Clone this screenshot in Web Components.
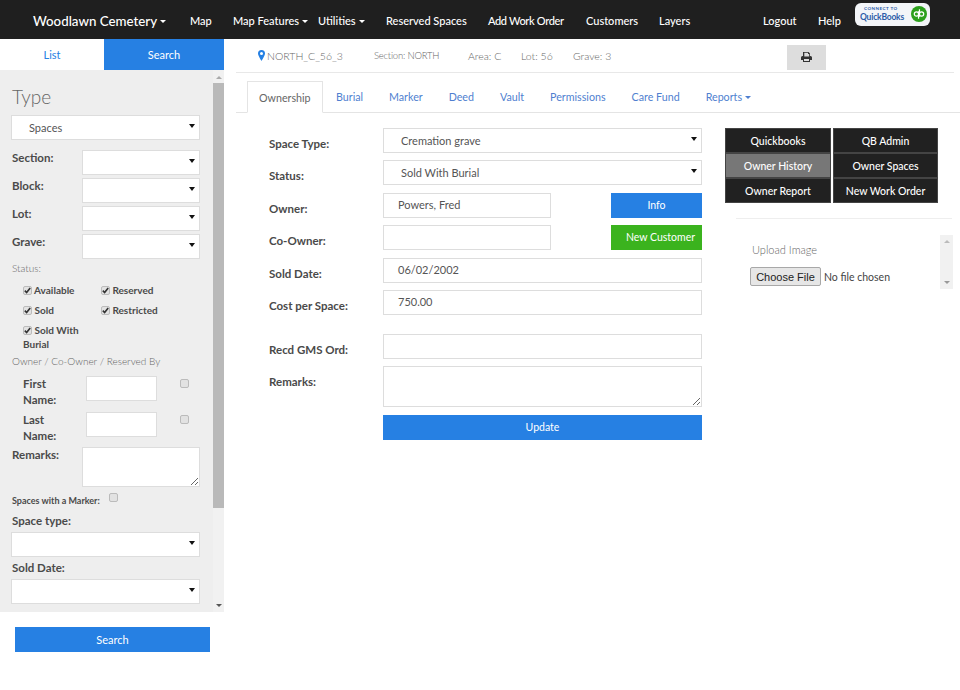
<!DOCTYPE html>
<html lang="en">
<head>
<meta charset="utf-8">
<title>Woodlawn Cemetery</title>
<style>
  html, body { margin: 0; padding: 0; background: #fff; }
  body { font-family: "Lato", "Liberation Sans", sans-serif; color: #555; width: 960px; height: 690px; overflow: hidden; }
  app-body { display: flex; }
</style>
</head>
<body>

<app-navbar></app-navbar>
<app-body>
  <search-panel></search-panel>
  <main-area></main-area>
</app-body>

<script>
// small base so every element only has to give its markup
class Base extends HTMLElement {
  constructor() {
    super();
    this.attachShadow({ mode: "open" });
  }
  connectedCallback() {
    this.render();
  }
}

class AppBody extends Base {
  render() {
    this.shadowRoot.innerHTML = `<style>:host{display:flex;align-items:flex-start}</style><slot></slot>`;
  }
}

class NavLink extends Base {
  render() {
    const caret = this.hasAttribute("caret");
    this.shadowRoot.innerHTML = `
      <style>
        :host { display: inline-flex; align-items: center; gap: 3px; color: #fff; white-space: nowrap; }
        i { width: 0; height: 0; border: 3px solid transparent; border-top-color: #fff; border-bottom: 0; margin-top: 1px; }
      </style>
      <slot></slot>${caret ? "<i></i>" : ""}`;
  }
}

class QbBadge extends Base {
  render() {
    this.shadowRoot.innerHTML = `
      <style>
        :host { display: flex; align-items: center; width: 75px; height: 23px; box-sizing: border-box; background: #f3f5f8; border-radius: 6px; padding: 0 3px 0 5px; margin-top: -13px; font-family: "Lato", sans-serif; }
        .txt { flex: 1; display: flex; flex-direction: column; align-items: flex-start; color: #2b5ca8; line-height: 1; }
        .a { font-size: 4.500px; font-weight: 700; letter-spacing: .5px; margin: 0 0 1px 4px; }
        .b { font-size: 8.500px; font-weight: 700; letter-spacing: -.2px; }
      </style>
      <div class="txt"><span class="a">CONNECT TO</span><span class="b">QuickBooks</span></div>
      <svg width="16" height="16" viewBox="0 0 17 17">
        <circle cx="8.5" cy="8.5" r="8.5" fill="#2ca01c"/>
        <g fill="none" stroke="#fff" stroke-width="1.3">
          <circle cx="5.8" cy="8.5" r="2.3"/>
          <circle cx="11.2" cy="8.5" r="2.3"/>
          <path d="M8 5.500v8M9 3.500v8"/>
        </g>
      </svg>`;
  }
}

class AppNavbar extends Base {
  render() {
    this.shadowRoot.innerHTML = `
      <style>
        :host { display: block; height: 39px; background: #1f1f1f; font-size: 11px; font-weight: 500; }
        nav { display: flex; align-items: center; height: 39px; box-sizing: border-box; padding: 2px 0 0 33px; }
        .brand { font-size: 13.3px; width: 157px; }
        .w1 { width: 43px; } .w2 { width: 85px; } .w3 { width: 68px; } .w4 { width: 102px; }
        .w5 { width: 98px; letter-spacing: -.35px; } .w6 { width: 73px; } .w7 { width: 104px; } .w8 { width: 55px; } .w9 { width: 37px; }
      </style>
      <nav>
        <nav-link class="brand" caret>Woodlawn Cemetery</nav-link>
        <nav-link class="w1">Map</nav-link>
        <nav-link class="w2" caret>Map Features</nav-link>
        <nav-link class="w3" caret>Utilities</nav-link>
        <nav-link class="w4">Reserved Spaces</nav-link>
        <nav-link class="w5">Add Work Order</nav-link>
        <nav-link class="w6">Customers</nav-link>
        <nav-link class="w7">Layers</nav-link>
        <nav-link class="w8">Logout</nav-link>
        <nav-link class="w9">Help</nav-link>
        <qb-badge></qb-badge>
      </nav>`;
  }
}

// looks like a select; label text goes in the slot
class SelectBox extends Base {
  render() {
    this.shadowRoot.innerHTML = `
      <style>
        :host { display: flex; align-items: center; box-sizing: border-box; height: 25px; background: #fff; border: 1px solid #ddd; color: #555; font-size: 11px; padding: 0 4px 1px 17px; }
        span { flex: 1; }
        i { width: 0; height: 0; border: 3px solid transparent; border-top: 4px solid #111; border-bottom: 0; margin-top: -2px; }
      </style>
      <span><slot></slot></span><i></i>`;
  }
}

class TextBox extends Base {
  render() {
    this.shadowRoot.innerHTML = `
      <style>
        :host { display: flex; align-items: center; box-sizing: border-box; height: 25px; background: #fff; border: 1px solid #ddd; color: #555; font-size: 11px; padding: 0 14px 1px; }
      </style>
      <slot></slot>`;
  }
}

class AreaBox extends Base {
  render() {
    this.shadowRoot.innerHTML = `
      <style>
        :host { display: block; }
        textarea { display: block; width: 100%; height: 100%; box-sizing: border-box; margin: 0; border: 1px solid #ddd; background: #fff; resize: vertical; outline: none; }
      </style>
      <textarea></textarea>`;
  }
}

class CheckMark extends Base {
  render() {
    const on = this.hasAttribute("checked");
    this.shadowRoot.innerHTML = `
      <style>
        :host { display: inline-block; flex: none; width: 9px; height: 9px; }
        span { display: block; box-sizing: border-box; width: 9px; height: 9px; background: #e2e2e2; border: 1px solid #bbb; border-radius: 2px; }
        svg { display: block; margin: -1px; }
      </style>
      <span>${on ? '<svg width="9" height="9" viewBox="0 0 10 10"><path d="M2 5.2l2 2 4-5" fill="none" stroke="#333" stroke-width="1.8"/></svg>' : ""}</span>`;
  }
}

class SearchPanel extends Base {
  render() {
    this.shadowRoot.innerHTML = `
      <style>
        :host { display: block; flex: none; width: 224px; font-size: 11px; color: #555; }
        b { font-weight: 700; color: #4a4a4a; }
        .tabs { display: grid; grid-template-columns: 104px 120px; height: 31px; line-height: 31px; text-align: center; font-size: 11px; }
        .tabs div:first-child { color: #2680e3; }
        .tabs div:last-child { background: #2680e3; color: #fff; }
        .body { display: flex; height: 542px; background: #eee; overflow: hidden; }
        .col { flex: 1; box-sizing: border-box; padding: 14px 13px 0 11px; }
        .title { font-size: 19px; font-weight: 300; color: #666; line-height: 26px; margin-bottom: 5px; padding-left: 1px; }
        .row { display: grid; grid-template-columns: 71px 1fr; margin-top: 3px; }
        .row b { font-size: 11.500px; line-height: 15px; padding-left: 1px; }
        .first { margin: 10px 0 3px; }
        .hint { font-size: 10px; font-weight: 300; color: #666; line-height: 14px; padding-left: 1px; }
        .checks { display: grid; grid-template-columns: 78px 1fr; row-gap: 6px; padding: 8px 0 3px 12px; font-size: 10px; line-height: 14px; }
        .checks check-mark { vertical-align: -1px; }
        .name { display: grid; grid-template-columns: 63px 71px 1fr; padding-left: 12px; margin-top: 4px; }
        .name b { font-size: 11.500px; line-height: 16px; }
        .name check-mark { margin: 3px 0 0 23px; }
        .marker { display: flex; align-items: flex-start; font-size: 9px; margin: 6px 0 6px 1px; gap: 9px; line-height: 12px; }
        .marker b { padding-top: 2px; }
        .big { display: block; font-size: 11.500px; line-height: 16px; margin-bottom: 3px; padding-left: 1px; }
        .gap { height: 3px; }
        .bar { flex: none; width: 11px; background: #f1f1f1; display: flex; flex-direction: column; align-items: center; }
        .bar i { flex: none; width: 0; height: 0; border: 3px solid transparent; }
        .up { border-bottom-color: #aaa !important; border-top: 0 !important; margin: 6px 0 4px; }
        .thumb { width: 11px; height: 425px; background: #b9b9b9; }
        .dn { border-top-color: #555 !important; border-bottom: 0 !important; margin-top: auto; margin-bottom: 5px; }
        .foot { display: block; padding: 15px 14px 0 15px; }
        .go { display: block; box-sizing: border-box; width: 195px; height: 25px; line-height: 24px; border: 0; padding: 0; background: #2680e3; color: #fff; font: inherit; font-size: 11px; text-align: center; }
      </style>
      <div class="tabs"><div>List</div><div>Search</div></div>
      <div class="body">
        <div class="col">
          <div class="title">Type</div>
          <select-box>Spaces</select-box>
          <div class="row first"><b>Section:</b><select-box></select-box></div>
          <div class="row"><b>Block:</b><select-box></select-box></div>
          <div class="row"><b>Lot:</b><select-box></select-box></div>
          <div class="row"><b>Grave:</b><select-box></select-box></div>
          <div class="hint" style="margin-top:2px">Status:</div>
          <div class="checks">
            <b><check-mark checked></check-mark> Available</b>
            <b><check-mark checked></check-mark> Reserved</b>
            <b><check-mark checked></check-mark> Sold</b>
            <b><check-mark checked></check-mark> Restricted</b>
            <b style="grid-column:1"><check-mark checked></check-mark> Sold With<br>Burial</b>
          </div>
          <div class="hint">Owner / Co-Owner / Reserved By</div>
          <div class="name" style="margin-top:8px"><b>First<br>Name:</b><text-box></text-box><check-mark></check-mark></div>
          <div class="name"><b>Last<br>Name:</b><text-box></text-box><check-mark></check-mark></div>
          <div class="row"><b>Remarks:</b><area-box style="height:40px"></area-box></div>
          <div class="marker"><b>Spaces with a Marker:</b><check-mark></check-mark></div>
          <b class="big">Space type:</b>
          <select-box></select-box>
          <div class="gap"></div>
          <b class="big">Sold Date:</b>
          <select-box></select-box>
        </div>
        <div class="bar"><i class="up"></i><div class="thumb"></div><i class="dn"></i></div>
      </div>
      <div class="foot"><button class="go">Search</button></div>`;
  }
}

class InfoBar extends Base {
  render() {
    this.shadowRoot.innerHTML = `
      <style>
        :host { display: flex; align-items: center; box-sizing: border-box; height: 34px; margin: 0 6px 0 12px; padding: 0 0 0 22px; border-bottom: 1px solid #e8e8e8; font-size: 10.5px; font-weight: 300; color: #666; }
        svg { margin-right: 2px; }
        .a { width: 107px; } .b { width: 94px; font-size: 9.5px; letter-spacing: -.2px; } .c { width: 53px; } .d { width: 52px; } .e { width: 214px; }
        .print { width: 39px; height: 25px; background: #ddd; display: flex; align-items: center; justify-content: center; margin-top: 3px; }
        .print svg { margin: 0; }
      </style>
      <svg width="7" height="11" viewBox="0 0 7 11"><path fill-rule="evenodd" fill="#2680e3" d="M3.5 0A3.5 3.5 0 0 0 0 3.5C0 5.6 3.5 11 3.5 11S7 5.6 7 3.5A3.5 3.5 0 0 0 3.5 0zm0 2a1.5 1.5 0 1 1 0 3 1.5 1.5 0 0 1 0-3z"/></svg>
      <span class="a">NORTH_C_56_3</span>
      <span class="b">Section: NORTH</span>
      <span class="c">Area: C</span>
      <span class="d">Lot: 56</span>
      <span class="e">Grave: 3</span>
      <div class="print">
        <svg width="11" height="10" viewBox="0 0 11 10"><path fill="#333" fill-rule="evenodd" d="M2.5 0h5L9 1.5V4h.5A1.5 1.5 0 0 1 11 5.500V8H9v2H2V8H0V5.500A1.500 1.500 0 0 1 1.500 4H2V0zm.8.8V4.500h4.900V2H7V.8zM3 7v2h5V7z"/></svg>
      </div>`;
  }
}

class TabBar extends Base {
  render() {
    const names = ["Burial", "Marker", "Deed", "Vault", "Permissions", "Care Fund"];
    this.shadowRoot.innerHTML = `
      <style>
        :host { display: flex; align-items: flex-end; box-sizing: border-box; height: 40px; margin-left: 12px; padding-left: 11px; border-bottom: 1px solid #e4e4e4; font-size: 10.7px; color: #4f7fd0; }
        div { height: 32px; line-height: 32px; padding: 0 13px; white-space: nowrap; margin-bottom: -1px; box-sizing: border-box; }
        .on { color: #666; background: #fff; border: 1px solid #e4e4e4; border-bottom: 1px solid #fff; line-height: 31px; padding: 0 11px; width: 76px; }
        i { display: inline-block; width: 0; height: 0; border: 3px solid transparent; border-top-color: #4f7fd0; border-bottom: 0; margin-left: 3px; vertical-align: 2px; }
      </style>
      <div class="on">Ownership</div>
      ${names.map(n => `<div>${n}</div>`).join("")}
      <div>Reports<i></i></div>`;
  }
}

class FormRow extends Base {
  render() {
    this.shadowRoot.innerHTML = `
      <style>
        :host { display: grid; grid-template-columns: 114px 1fr; font-size: 11.5px; }
        b { color: #4a4a4a; font-weight: 700; padding-top: 9px; line-height: 14px; white-space: nowrap; }
      </style>
      <b>${this.getAttribute("label")}</b><slot></slot>`;
  }
}

class OwnerForm extends Base {
  render() {
    this.shadowRoot.innerHTML = `
      <style>
        :host { display: flex; flex-direction: column; gap: 7.4px; flex: none; width: 433px; }
        .pair { display: grid; grid-template-columns: 168px 91px; justify-content: space-between; }
        .btn { height: 25px; line-height: 25px; text-align: center; color: #fff; font-size: 10.5px; }
        .blue { background: #2680e3; }
        .green { background: #3bb31e; padding-left: 8px; white-space: nowrap; }
        .spacer { height: 4.2px; }
      </style>
      <form-row label="Space Type:"><select-box>Cremation grave</select-box></form-row>
      <form-row label="Status:"><select-box>Sold With Burial</select-box></form-row>
      <form-row label="Owner:"><div class="pair"><text-box>Powers, Fred</text-box><div class="btn blue">Info</div></div></form-row>
      <form-row label="Co-Owner:"><div class="pair"><text-box></text-box><div class="btn green">New Customer</div></div></form-row>
      <form-row label="Sold Date:"><text-box>06/02/2002</text-box></form-row>
      <form-row label="Cost per Space:"><text-box>750.00</text-box></form-row>
      <div class="spacer"></div>
      <form-row label="Recd GMS Ord:"><text-box></text-box></form-row>
      <form-row label="Remarks:"><area-box style="height:41px"></area-box></form-row>
      <form-row label=""><div class="btn blue">Update</div></form-row>`;
  }
}

class SideTools extends Base {
  render() {
    const items = ["Quickbooks", "QB Admin", "Owner History", "Owner Spaces", "Owner Report", "New Work Order"];
    this.shadowRoot.innerHTML = `
      <style>
        :host { display: block; flex: none; width: 229px; }
        .grid { display: grid; grid-template-columns: 106px 105px; column-gap: 2px; width: 213px; }
        .grid div { height: 25px; line-height: 24px; box-sizing: border-box; text-align: center; background: #212121; border: 1px solid #444; color: #fff; font-size: 10.5px; font-weight: 500; }
        .grid div.on { background: #777; }
        .line { height: 1px; background: #eee; margin: 15px 2px 0 11px; }
        .up { display: flex; margin: 16px 1px 0 25px; }
        .inner { flex: 1; padding-top: 8px; font-size: 11px; color: #666; font-weight: 300; }
        .inner > div:first-child { padding-left: 2px; }
        .file { display: flex; align-items: center; gap: 3px; margin-top: 11px; font-size: 10.5px; color: #444; font-weight: 400; }
        button { box-sizing: border-box; width: 71px; height: 19px; padding: 0; border: 1px solid #a8a8a8; border-radius: 2px; background: #e6e6e6; color: #222; font: 11px "Liberation Sans", sans-serif; white-space: nowrap; }
        .bar { flex: none; width: 13px; height: 54px; background: #f1f1f1; display: flex; flex-direction: column; align-items: center; justify-content: space-between; padding: 5px 0; box-sizing: border-box; }
        .bar i { width: 0; height: 0; border: 3px solid transparent; }
        .bar i:first-child { border-bottom-color: #bbb; border-top: 0; }
        .bar i:last-child { border-top-color: #999; border-bottom: 0; }
      </style>
      <div class="grid">
        ${items.map((t, i) => `<div class="${i === 2 ? "on" : ""}">${t}</div>`).join("")}
      </div>
      <div class="line"></div>
      <div class="up">
        <div class="inner">
          <div>Upload Image</div>
          <div class="file"><button>Choose File</button><span>No file chosen</span></div>
        </div>
        <div class="bar"><i></i><i></i></div>
      </div>`;
  }
}

class MainArea extends Base {
  render() {
    this.shadowRoot.innerHTML = `
      <style>
        :host { display: block; flex: 1; min-width: 0; width: 736px; }
        .cols { display: flex; padding: 15px 0 0 45px; gap: 23px; }
      </style>
      <info-bar></info-bar>
      <tab-bar></tab-bar>
      <div class="cols">
        <owner-form></owner-form>
        <side-tools></side-tools>
      </div>`;
  }
}

customElements.define("app-body", AppBody);
customElements.define("nav-link", NavLink);
customElements.define("qb-badge", QbBadge);
customElements.define("app-navbar", AppNavbar);
customElements.define("select-box", SelectBox);
customElements.define("text-box", TextBox);
customElements.define("area-box", AreaBox);
customElements.define("check-mark", CheckMark);
customElements.define("search-panel", SearchPanel);
customElements.define("info-bar", InfoBar);
customElements.define("tab-bar", TabBar);
customElements.define("form-row", FormRow);
customElements.define("owner-form", OwnerForm);
customElements.define("side-tools", SideTools);
customElements.define("main-area", MainArea);
</script>
</body>
</html>
